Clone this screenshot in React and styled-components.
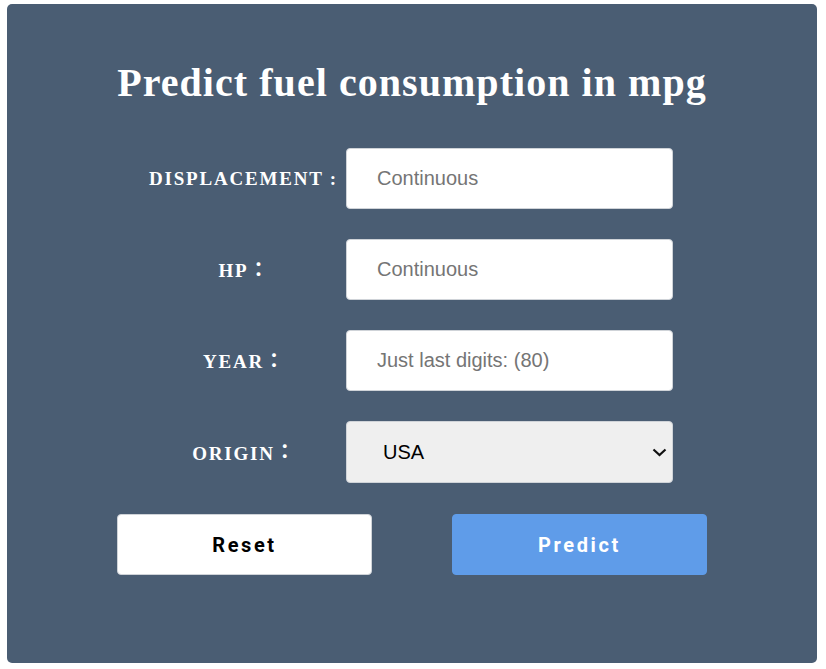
import React from 'react';
import styled, { createGlobalStyle } from 'styled-components';

const GlobalStyle = createGlobalStyle`
  body {
    margin: 0;
    padding: 4px 9px 6px 7px;
    background: #ffffff;
    font-family: "Liberation Serif", serif;
  }
`;

const Card = styled.div`
  background: #4a5d73;
  border-radius: 5px;
  height: 659px;
  box-sizing: border-box;
  padding-top: 56px;
  display: flex;
  flex-direction: column;
  align-items: center;
`;

const Title = styled.h1`
  margin: 0 0 42px;
  color: #ffffff;
  font-family: "Liberation Serif", serif;
  font-size: 40px;
  font-weight: bold;
  letter-spacing: 1.05px;
  line-height: 46px;
`;

const Form = styled.form`
  width: 590px;
  display: grid;
  grid-template-columns: 229px 327px;
  row-gap: 30px;
`;

const Label = styled.label`
  padding-left: 24px;
  display: flex;
  align-items: center;
  justify-content: center;
  color: #ffffff;
  font-family: "Liberation Serif", "Noto Sans CJK JP", serif;
  font-size: 19px;
  font-weight: bold;
  letter-spacing: 1.8px;
  padding-top: ${(p) => (p.$wide ? '0' : '3px')};
`;

const Colon = styled.span`
  position: relative;
  top: -3px;
  font-family: "Noto Sans CJK JP", sans-serif;
  font-size: 20px;
  letter-spacing: 0;
`;

const Input = styled.input`
  box-sizing: border-box;
  width: 327px;
  height: 61px;
  border: 1px solid #cfd3d8;
  border-radius: 4px;
  padding: 0 0 0 30px;
  font-family: "Liberation Sans", Arial, sans-serif;
  font-size: 20px;
  color: #222;
  background: #ffffff;
  outline: none;
  &::placeholder {
    color: #757575;
  }
`;

const SelectWrap = styled.div`
  position: relative;
  width: 327px;
  height: 62px;
`;

const Select = styled.select`
  appearance: none;
  box-sizing: border-box;
  width: 100%;
  height: 100%;
  border: 1px solid #cfd3d8;
  border-radius: 4px;
  padding: 0 40px 0 36px;
  font-family: "Liberation Sans", Arial, sans-serif;
  font-size: 20px;
  color: #000;
  background-color: #efefef;
  outline: none;
`;

const Chevron = styled.svg`
  position: absolute;
  right: 6px;
  top: 27px;
  pointer-events: none;
`;

const Buttons = styled.div`
  width: 590px;
  margin-top: 31px;
  display: flex;
  justify-content: space-between;
`;

const Button = styled.button`
  width: 255px;
  height: 61px;
  border-radius: 4px;
  border: 1px solid ${(p) => (p.$primary ? '#5f9ce9' : '#cfd3d8')};
  background: ${(p) => (p.$primary ? '#5f9ce9' : '#ffffff')};
  color: ${(p) => (p.$primary ? '#ffffff' : '#000000')};
  font-family: Roboto, "Liberation Sans", sans-serif;
  font-size: 20px;
  font-weight: 700;
  letter-spacing: 2.6px;
  cursor: pointer;
`;

const fields = [
  { name: 'DISPLACEMENT', placeholder: 'Continuous', wide: true },
  { name: 'HP', placeholder: 'Continuous' },
  { name: 'YEAR', placeholder: 'Just last digits: (80)' },
];

export default function App() {
  return (
    <>
      <GlobalStyle />
      <Card>
        <Title>Predict fuel consumption in mpg</Title>
        <Form onSubmit={(e) => e.preventDefault()}>
          {fields.map((f) => (
            <React.Fragment key={f.name}>
              <Label $wide={f.wide}>
                {f.wide ? `${f.name} :` : <>{f.name}<Colon>：</Colon></>}
              </Label>
              <Input placeholder={f.placeholder} />
            </React.Fragment>
          ))}
          <Label>
            ORIGIN<Colon>：</Colon>
          </Label>
          <SelectWrap>
            <Select defaultValue="1">
              <option value="1">USA</option>
              <option value="2">Europe</option>
              <option value="3">Japan</option>
            </Select>
            <Chevron width="15" height="9" viewBox="0 0 15 9">
              <path d="M1.5 1.5 L7.5 7 L13.5 1.5" fill="none" stroke="#111" strokeWidth="2.2" />
            </Chevron>
          </SelectWrap>
        </Form>
        <Buttons>
          <Button type="button">Reset</Button>
          <Button type="button" $primary>Predict</Button>
        </Buttons>
      </Card>
    </>
  );
}
